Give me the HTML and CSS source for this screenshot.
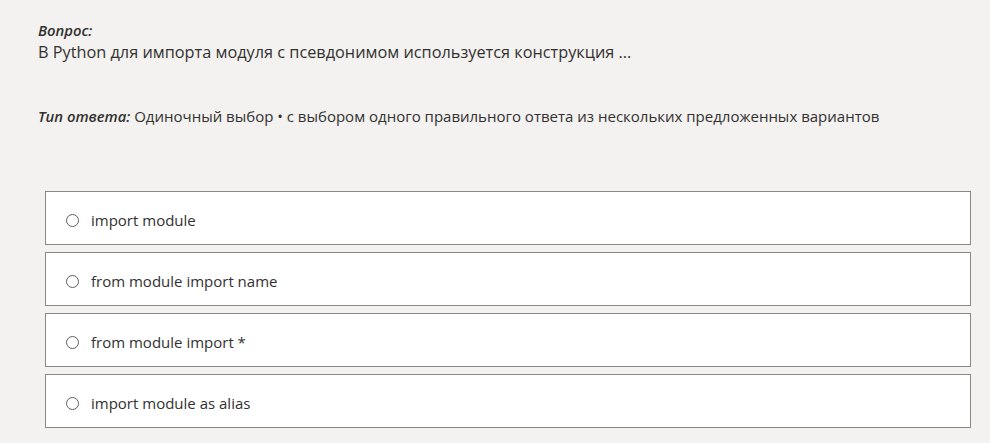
FILE: index.html
```html
<!DOCTYPE html>
<html lang="ru">
<head>
<meta charset="utf-8">
<title>Вопрос</title>
<link rel="stylesheet" href="styles.css">
</head>
<body>
<main class="page">
  <section class="question">
    <div class="label">Вопрос:</div>
    <div class="question-text">В Python для импорта модуля с псевдонимом используется конструкция ...</div>
  </section>
  <section class="answer-type">
    <span class="label">Тип ответа:</span> Одиночный выбор • с выбором одного правильного ответа из нескольких предложенных вариантов
  </section>
  <ul class="options">
    <li class="option"><span class="radio"></span><span class="option-text">import module</span></li>
    <li class="option"><span class="radio"></span><span class="option-text">from module import name</span></li>
    <li class="option"><span class="radio"></span><span class="option-text">from module import *</span></li>
    <li class="option"><span class="radio"></span><span class="option-text">import module as alias</span></li>
  </ul>
</main>
</body>
</html>
```

FILE: styles.css
```css
html, body {
  margin: 0;
  padding: 0;
  background: #f3f2f0;
}
body {
  font-family: "Open Sans", "Noto Sans", sans-serif;
  color: #323130;
  font-size: 15px;
}
.page {
  padding: 20px 19px 0 38px;
}
.label {
  font-weight: 600;
  font-style: italic;
  font-size: 14.8px;
}
.question .label {
  line-height: 20px;
}
.question-text {
  font-size: 16.3px;
  line-height: 25px;
}
.answer-type {
  margin-top: 41px;
  font-size: 15px;
  line-height: 20px;
}
.options {
  list-style: none;
  margin: 65px 0 0 7px;
  padding: 0;
  display: flex;
  flex-direction: column;
  gap: 7px;
}
.option {
  box-sizing: border-box;
  height: 54px;
  width: 926px;
  border: 1px solid #8a8886;
  background: #fff;
  display: flex;
  align-items: center;
  padding: 4px 0 0 20px;
  gap: 12px;
  font-size: 15px;
}
.radio {
  box-sizing: border-box;
  width: 13px;
  height: 13px;
  border: 1px solid #605e5c;
  border-radius: 50%;
  flex: none;
}
```
